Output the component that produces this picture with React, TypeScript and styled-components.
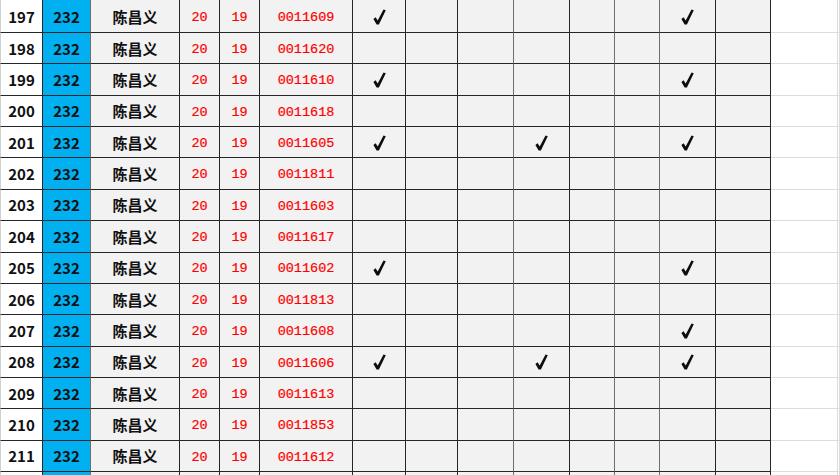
import React from "react";
import styled, { createGlobalStyle } from "styled-components";

const Global = createGlobalStyle`
  html, body { margin: 0; padding: 0; background: #ffffff; overflow: hidden; }
  #root { width: 840px; height: 475px; overflow: hidden; }
`;

const Sheet = styled.div`
  display: flex;
  flex-direction: column;
  width: 840px;
  height: 475px;
  overflow: hidden;
  background: #ffffff;
`;

const Row = styled.div<{ $h: number }>`
  display: grid;
  grid-template-columns: 43px 48px 89px 40px 40px 93px 53px 52px 56px 56px 45px 45px 56px 55px 67px 1fr;
  height: ${(p) => p.$h}px;
  flex: none;
`;

type Kind = "index" | "blue" | "name" | "red" | "code" | "mark" | "blank";

const bgFor: Record<Kind, string> = {
  index: "#ffffff",
  blue: "#00b0f0",
  name: "#f2f2f2",
  red: "#f2f2f2",
  code: "#f2f2f2",
  mark: "#f2f2f2",
  blank: "#ffffff",
};

const isRed = (k: Kind) => k === "red" || k === "code";

const Cell = styled.div<{ $kind: Kind; $soft?: boolean; $first?: boolean }>`
  box-sizing: border-box;
  display: flex;
  align-items: center;
  justify-content: center;
  background: ${(p) => bgFor[p.$kind]};
  border-bottom: 1px solid ${(p) => (p.$kind === "blank" ? "#dcdcdc" : "#262626")};
  border-right: 1px solid
    ${(p) => (p.$kind === "blank" ? "#dcdcdc" : p.$soft ? "#6e6e6e" : "#262626")};
  border-left: ${(p) => (p.$first ? "1px solid #d0d0d0" : "none")};
  white-space: nowrap;
  overflow: hidden;
  color: ${(p) => (isRed(p.$kind) ? "#ff0000" : "#111111")};
  font-family: ${(p) =>
    isRed(p.$kind)
      ? `"Liberation Mono", "Noto Sans CJK SC", monospace`
      : `"Noto Sans CJK SC", "Noto Sans", sans-serif`};
  font-size: ${(p) => (isRed(p.$kind) ? "13.5px" : "15px")};
  font-weight: ${(p) => (isRed(p.$kind) ? 400 : 700)};
  -webkit-text-stroke: ${(p) => (isRed(p.$kind) ? "0.2px #ff0000" : "0")};
  line-height: 1;
  padding-top: ${(p) => (isRed(p.$kind) ? "3px" : "0")};
`;

const Check = styled.svg`
  width: 13px;
  height: 16px;
  display: block;
  margin-top: 1px;
`;

const CheckMark = () => (
  <Check viewBox="0 0 13 16" aria-label="√">
    <path
      d="M0.4 9.9 L2.6 8.3 L4.7 11.4 L10.5 0.5 L12.8 1.3 L5.9 15.6 L3.6 15.6 Z"
      fill="#0d0d0d"
    />
  </Check>
);

const softCols = new Set([1, 8, 10, 11, 14]);

type RowData = { n: number; code: string; marks: number[] };

const rows: RowData[] = [
  { n: 197, code: "0011609", marks: [0, 6] },
  { n: 198, code: "0011620", marks: [] },
  { n: 199, code: "0011610", marks: [0, 6] },
  { n: 200, code: "0011618", marks: [] },
  { n: 201, code: "0011605", marks: [0, 3, 6] },
  { n: 202, code: "0011811", marks: [] },
  { n: 203, code: "0011603", marks: [] },
  { n: 204, code: "0011617", marks: [] },
  { n: 205, code: "0011602", marks: [0, 6] },
  { n: 206, code: "0011813", marks: [] },
  { n: 207, code: "0011608", marks: [6] },
  { n: 208, code: "0011606", marks: [0, 3, 6] },
  { n: 209, code: "0011613", marks: [] },
  { n: 210, code: "0011853", marks: [] },
  { n: 211, code: "0011612", marks: [] },
  { n: 212, code: "", marks: [] },
];

const rowHeight = (i: number) => (i === 0 ? 33 : 31.36);

export default function App() {
  return (
    <>
      <Global />
      <Sheet>
        {rows.map((r, i) => (
          <Row key={r.n} $h={rowHeight(i)}>
            <Cell $kind="index" $first>{r.code ? r.n : ""}</Cell>
            <Cell $kind="blue" $soft={softCols.has(1)}>{r.code ? "232" : ""}</Cell>
            <Cell $kind="name">{r.code ? "陈昌义" : ""}</Cell>
            <Cell $kind="red">{r.code ? "20" : ""}</Cell>
            <Cell $kind="red">{r.code ? "19" : ""}</Cell>
            <Cell $kind="code">{r.code}</Cell>
            {Array.from({ length: 8 }).map((_, c) => (
              <Cell key={c} $kind="mark" $soft={softCols.has(c + 6)}>
                {r.marks.includes(c) ? <CheckMark /> : null}
              </Cell>
            ))}
            <Cell $kind="blank" />
            <Cell $kind="blank" />
          </Row>
        ))}
      </Sheet>
    </>
  );
}
